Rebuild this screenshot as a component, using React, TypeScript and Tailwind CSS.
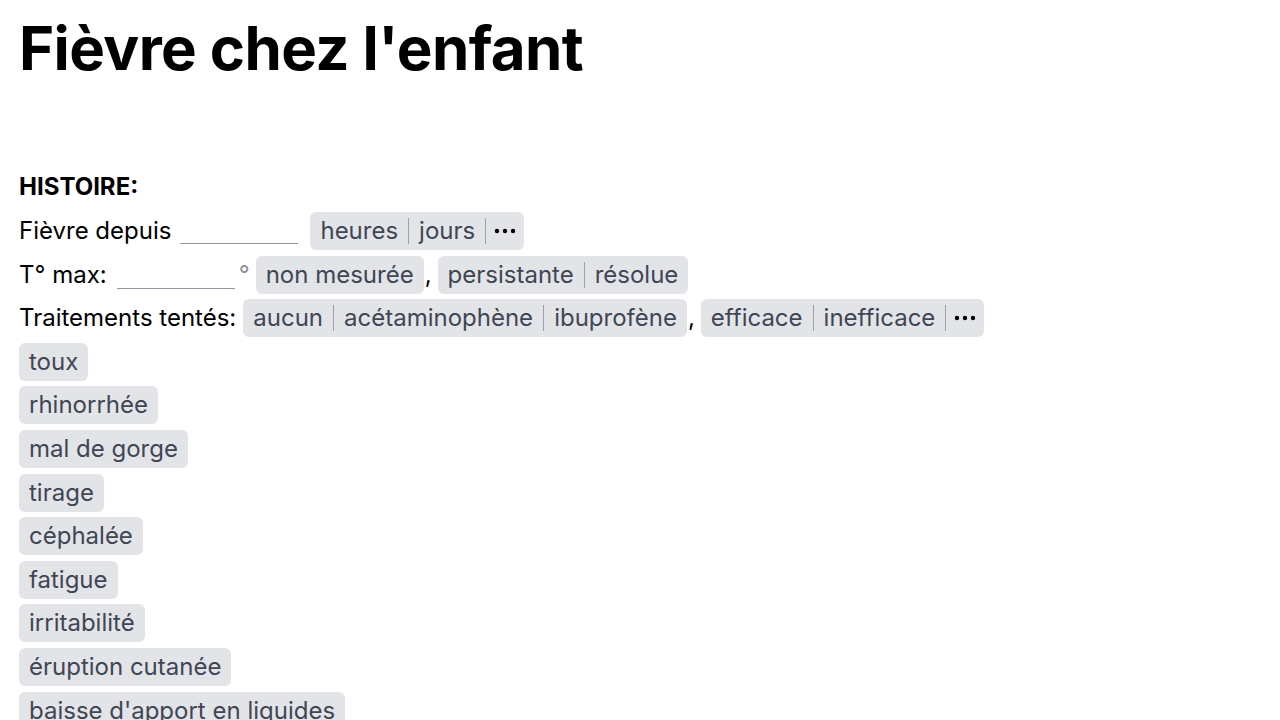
import React from 'react';

const Dots: React.FC = () => (
  <svg width="22" height="6" viewBox="0 0 22 6" className="block">
    <circle cx="3" cy="3" r="2.2" fill="#000" />
    <circle cx="11" cy="3" r="2.2" fill="#000" />
    <circle cx="19" cy="3" r="2.2" fill="#000" />
  </svg>
);

const Chip: React.FC<{ options: string[]; more?: boolean }> = ({ options, more }) => (
  <span className="inline-flex items-center h-[38px] rounded-md bg-[#e3e4e8] text-[#3f4654]">
    {options.map((o, i) => (
      <React.Fragment key={o}>
        {i > 0 && <span className="w-px h-[26px] bg-[#9ca0a8]" />}
        <span className="px-2.5">{o}</span>
      </React.Fragment>
    ))}
    {more && (
      <>
        <span className="w-px h-[26px] bg-[#9ca0a8]" />
        <span className="px-2">
          <Dots />
        </span>
      </>
    )}
  </span>
);

const symptoms = [
  'toux',
  'rhinorrhée',
  'mal de gorge',
  'tirage',
  'céphalée',
  'fatigue',
  'irritabilité',
  'éruption cutanée',
  "baisse d'apport en liquides",
];

export default function App() {
  return (
    <div className="min-h-screen bg-white text-black px-[19px] font-['Inter',sans-serif]">
      <h1 className="text-[60px] leading-none font-bold tracking-[-0.6px] pt-[18px]">Fièvre chez l'enfant</h1>

      <div className="mt-[95px] text-[24px] leading-[32px]">
        <div className="font-bold h-[28px] flex items-center">HISTOIRE:</div>

        <div className="flex flex-col gap-[5.6px] mt-[11px]">
          <div className="flex items-center">
            <span>Fièvre depuis</span>
            <span className="block ml-[9px] w-[118px] h-[26px] border-b border-[#8e94a0]" />
            <span className="ml-[12px]"><Chip options={['heures', 'jours']} more /></span>
          </div>

          <div className="flex items-center">
            <span>T° max:</span>
            <span className="block ml-[10px] w-[118px] h-[28px] border-b border-[#8e94a0]" />
            <span className="ml-[4px] text-[#8b909a] text-[24px] leading-[24px]">°</span>
            <span className="ml-[6px]"><Chip options={['non mesurée']} /></span>
            <span className="ml-[1px] mr-[6px]">,</span>
            <Chip options={['persistante', 'résolue']} />
          </div>

          <div className="flex items-center">
            <span>Traitements tentés:</span>
            <span className="ml-[7px]"><Chip options={['aucun', 'acétaminophène', 'ibuprofène']} /></span>
            <span className="ml-[1px] mr-[6px]">,</span>
            <Chip options={['efficace', 'inefficace']} more />
          </div>

          {symptoms.map((s) => (
            <div key={s} className="flex items-center">
              <Chip options={[s]} />
            </div>
          ))}
        </div>
      </div>
    </div>
  );
}
